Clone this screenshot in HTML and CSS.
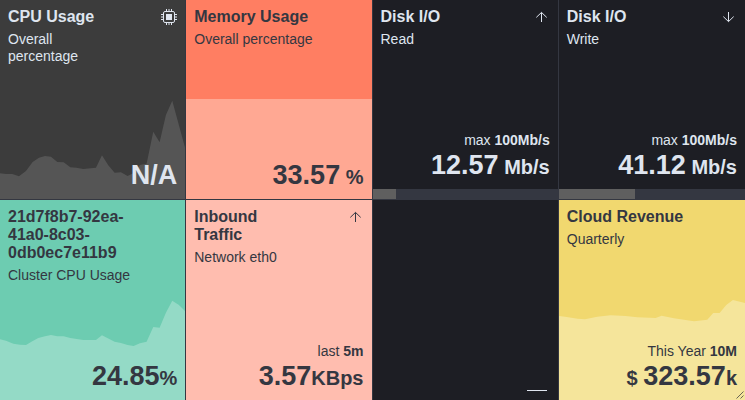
FILE: index.html
```html
<!DOCTYPE html>
<html lang="en">
<head>
<meta charset="utf-8">
<title>Metrics</title>
<link rel="stylesheet" href="styles.css">
</head>
<body>
<main class="grid">
  <section class="metric light cpu">
    <svg class="spark" viewBox="0 0 556 327" preserveAspectRatio="none"><path d="M0 250L18 252H37L57 259L78 243L98 216L117 203L135 198L153 200L172 216L191 217L211 232L229 233L250 237L288 233L306 196L325 226L344 248L363 247L383 258L401 249L420 225L440 221L460 125L479 157L498 75L517 32L556 175V327H0Z"/></svg>
    <header><div><h2>CPU Usage</h2><p>Overall<br>percentage</p></div>
      <svg class="icon" viewBox="0 0 16 16"><rect x="2.5" y="2.5" width="11" height="11" rx="1.5" class="line"/><path class="solid" d="M5 5h6v6H5z"/><path class="line" d="M5.5 0v2M8 0v2M10.5 0v2M5.5 14v2M8 14v2M10.5 14v2M0 5.5h2M0 8h2M0 10.5h2M14 5.5h2M14 8h2M14 10.5h2"/></svg>
    </header>
    <footer><div class="value">N/A</div></footer>
  </section>
  <section class="metric memory">
    <div class="fill"></div>
    <header><div><h2>Memory Usage</h2><p>Overall percentage</p></div></header>
    <footer><div class="value">33.57<span class="part"> %</span></div></footer>
  </section>
  <section class="metric light bar">
    <header><div><h2>Disk I/O</h2><p>Read</p></div>
      <svg class="icon" viewBox="0 0 16 16"><path class="line" d="M7.5 13V3.5M2.3 8.4L7.5 3.4l5.2 5"/></svg></header>
    <footer><div class="extra">max <b>100Mb/s</b></div><div class="value">12.57<span class="part"> Mb/s</span></div></footer>
    <div class="track"><div class="progress" style="width:12.57%"></div></div>
  </section>
  <section class="metric light bar">
    <header><div><h2>Disk I/O</h2><p>Write</p></div>
      <svg class="icon" viewBox="0 0 16 16"><path class="line" d="M7.5 3v9.5M2.3 7.6L7.5 12.6l5.2-5"/></svg></header>
    <footer><div class="extra">max <b>100Mb/s</b></div><div class="value">41.12<span class="part"> Mb/s</span></div></footer>
    <div class="track"><div class="progress" style="width:41.12%"></div></div>
  </section>
  <section class="metric cluster">
    <svg class="spark" viewBox="0 0 556 330" preserveAspectRatio="none"><path d="M0 148L18 152L40 161L60 164L78 165L97 154L115 144L135 139L153 135L172 139H191L211 144L250 150H288L306 136L344 155L363 159L383 165L401 168L420 160L440 155L460 111L479 113L498 68L517 32L537 45L556 64V330H0Z"/></svg>
    <header><div><h2>21d7f8b7-92ea-<br>41a0-8c03-<br>0db0ec7e11b9</h2><p>Cluster CPU Usage</p></div></header>
    <footer><div class="value">24.85<span class="part">%</span></div></footer>
  </section>
  <section class="metric inbound">
    <header><div><h2>Inbound<br>Traffic</h2><p>Network eth0</p></div>
      <svg class="icon" viewBox="0 0 16 16"><path class="line" d="M7.5 13V3.5M2.3 8.4L7.5 3.4l5.2 5"/></svg></header>
    <footer><div class="extra">last <b>5m</b></div><div class="value">3.57<span class="part">KBps</span></div></footer>
  </section>
  <section class="metric empty"><div class="dash"></div></section>
  <section class="metric revenue">
    <svg class="spark" viewBox="0 0 559 330" preserveAspectRatio="none"><path d="M0 78L18 80L56 86L78 88L115 80L155 76L200 78L235 82L290 84L308 77L345 85L405 94L445 89L463 69H482L502 45L522 30L559 39V330H0Z"/></svg>
    <header><div><h2>Cloud Revenue</h2><p>Quarterly</p></div></header>
    <footer><div class="extra">This Year <b>10M</b></div><div class="value"><span class="part">$ </span>323.57<span class="part">k</span></div></footer>
    <svg class="grip" viewBox="0 0 8 8"><path d="M0.5 7.5l7-7M4.5 7.5l3-3"/></svg>
  </section>
</main>
</body>
</html>
```
FILE: styles.css
```css
* { box-sizing: border-box; }
body { margin: 0; background: #1d1e24; font-family: "Liberation Sans", Arial, sans-serif; }
.grid { display: grid; grid-template-columns: repeat(4, 1fr); grid-template-rows: 200px 200px; width: 745px; height: 400px; overflow: hidden; }
.metric { position: relative; display: flex; flex-direction: column; justify-content: space-between; min-width: 0; border-right: 1px solid #343741; border-bottom: 1px solid #343741; color: #343741; background: #1d1e24; }
.metric:nth-child(4n) { border-right: 0; }
.metric:nth-child(n+5) { border-bottom: 0; }
.metric.light { color: #dfe5ef; }
.cpu { background: #3c3c3c; }
.memory { background: #ff7e62; }
.cluster { background: #6dccb1; }
.inbound { background: #ffbdaf; }
.revenue { background: #f1d86f; }
.spark { position: absolute; left: 0; bottom: 0; width: 100%; height: 109px; }
.cluster .spark, .revenue .spark { height: 110px; }
.cpu .spark { fill: #555; }
.cluster .spark { fill: #94dac6; }
.revenue .spark { fill: #f5e59b; }
.fill { position: absolute; left: 0; right: 0; bottom: 0; height: 100px; background: #ffa893; }
header, footer { position: relative; }
header { display: flex; justify-content: space-between; padding: 8px 8px 0; }
h2 { margin: 0; font-size: 16px; line-height: 18px; font-weight: 700; }
p { margin: 5px 0 0; font-size: 14px; line-height: 17px; }
.icon { flex: none; width: 16px; height: 16px; margin-top: 1px; }
.line { fill: none; stroke: currentColor; stroke-width: 1; }
.solid { fill: currentColor; }
footer { padding: 0 8px 8px; text-align: right; white-space: pre; }
.bar footer { margin-top: auto; }
.extra { font-size: 14px; line-height: 17px; }
.value { font-size: 27px; line-height: 32px; font-weight: 700; }
.part { font-size: 20px; line-height: 1; }
.track { height: 10px; background: #343741; }
.progress { height: 100%; background: #5f5f5f; }
.dash { width: 20px; height: 1px; margin: auto 11px 9px auto; background: #dfe5ef; }
.grip { position: absolute; right: 1px; bottom: 1px; width: 8px; height: 8px; fill: none; stroke: #454440; stroke-width: 0.8; }
```
